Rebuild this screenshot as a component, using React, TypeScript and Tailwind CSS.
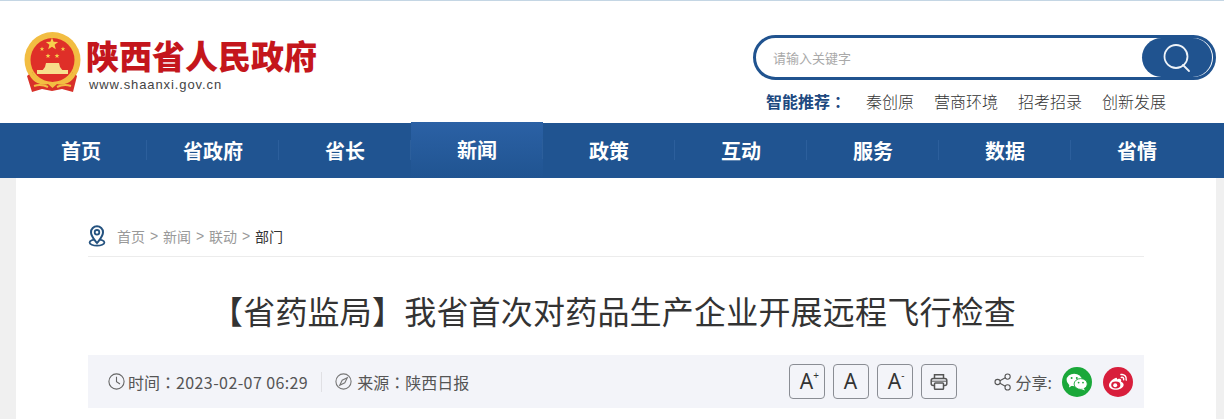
const CJK = `"Noto Sans CJK SC", "Liberation Sans", sans-serif`;
const TC = `"Noto Sans CJK TC", sans-serif`;

function Star({ x, y, r }: { x: number; y: number; r: number }) {
  const pts = Array.from({ length: 10 }, (_, i) => {
    const rr = i % 2 === 0 ? r : r * 0.42;
    const a = (Math.PI / 5) * i - Math.PI / 2;
    return `${x + rr * Math.cos(a)},${y + rr * Math.sin(a)}`;
  }).join(" ");
  return <polygon points={pts} fill="#f6d04d" />;
}

function Emblem() {
  return (
    <svg width="57" height="60" viewBox="0 0 57 60" className="shrink-0">
      <circle cx="28.5" cy="28" r="28" fill="#f2bd42" />
      <circle cx="28.5" cy="28" r="22" fill="#df2f28" />
      <Star x={28} y={12} r={6.5} />
      <Star x={18} y={17} r={2.4} />
      <Star x={39} y={17} r={2.4} />
      <Star x={24} y={24} r={2.6} />
      <Star x={33} y={24} r={2.6} />
      <path d="M18 39 L39 39 L36 35 L35 31 L22 31 L21 35 Z" fill="#f7dc8a" />
      <rect x="13" y="38" width="31" height="4" fill="#f8e08e" />
      <path d="M8 40 L3 44 L8 60 L18 57 L28 59 L38 57 L49 60 L53 44 L49 40 C44 50 36 52 28.5 52 C21 52 13 50 8 40 Z" fill="#d83029" />
      <path d="M7 38 C11 47 19 50 28.5 50 C38 50 46 47 50 38 L53 40 C49 51 39 54 33 52 L28.5 56 L24 52 C18 54 8 51 4 40 Z" fill="#f2bd42" />
      <path d="M10 54 C16 52 20 53 24 55 M33 55 C37 53 41 52 47 54" fill="none" stroke="#f2bd42" strokeWidth="2" />
    </svg>
  );
}

function SearchIcon() {
  return (
    <svg width="30" height="30" viewBox="0 0 30 30" fill="none" stroke="#eef3f8" strokeWidth="1.8">
      <circle cx="14" cy="13.5" r="11.5" />
      <path d="M21 22 L27 28" strokeLinecap="round" />
    </svg>
  );
}

function PinIcon() {
  return (
    <svg width="18" height="22" viewBox="0 0 18 22" fill="none" className="shrink-0">
      <ellipse cx="9" cy="17.5" rx="7.4" ry="3.2" stroke="#24527f" strokeWidth="1.8" />
      <path d="M9 18 C6 14 3 11.5 3 7.3 A6 6 0 0 1 15 7.3 C15 11.5 12 14 9 18 Z" fill="#fff" stroke="#24527f" strokeWidth="2" />
      <circle cx="9" cy="7.3" r="2.3" stroke="#24527f" strokeWidth="1.8" />
    </svg>
  );
}

function ClockIcon() {
  return (
    <svg width="17" height="17" viewBox="0 0 17 17" fill="none" stroke="#666" strokeWidth="1.1" className="shrink-0">
      <circle cx="8.5" cy="8.5" r="7.6" />
      <path d="M8.5 3.8 V8.7 L12 11" />
    </svg>
  );
}

function CompassIcon() {
  return (
    <svg width="17" height="17" viewBox="0 0 17 17" fill="none" stroke="#777" strokeWidth="1.1" className="shrink-0">
      <circle cx="8.5" cy="8.5" r="7.6" />
      <path d="M12.3 4.7 L9.8 9.8 L4.7 12.3 L7.2 7.2 Z" />
    </svg>
  );
}

function PrintIcon() {
  return (
    <svg width="18" height="18" viewBox="0 0 18 18" fill="none" stroke="#555" strokeWidth="1.5">
      <path d="M4.5 5.5 V1.8 H13.5 V5.5" />
      <rect x="1.2" y="5.5" width="15.6" height="7" rx="2" />
      <rect x="4.5" y="10" width="9" height="6.2" rx="0.8" fill="#f3f4f9" />
      <path d="M1.5 8.2 H16.5" strokeWidth="1" />
    </svg>
  );
}

function ShareIcon() {
  return (
    <svg width="18" height="18" viewBox="0 0 18 18" fill="none" stroke="#555" strokeWidth="1.1" className="shrink-0">
      <circle cx="3.6" cy="9" r="2.6" />
      <circle cx="13.6" cy="3.6" r="2.6" />
      <circle cx="13.6" cy="14.4" r="2.6" />
      <path d="M5.9 7.8 L11.3 4.8 M5.9 10.2 L11.3 13.2" />
    </svg>
  );
}

function WeChatIcon() {
  return (
    <svg width="22" height="18" viewBox="0 0 22 18">
      <ellipse cx="8.2" cy="7" rx="7.6" ry="6.2" fill="#fff" />
      <path d="M3.5 10.5 L3 14.5 L7 12 Z" fill="#fff" />
      <circle cx="5.6" cy="5" r="1" fill="#1aa83a" />
      <circle cx="10.8" cy="5" r="1" fill="#1aa83a" />
      <ellipse cx="14.7" cy="11" rx="6.6" ry="5.4" fill="#fff" stroke="#1aa83a" strokeWidth="0.9" />
      <path d="M17.5 15 L19 17.5 L15 16 Z" fill="#fff" />
      <circle cx="12.6" cy="9.6" r="0.9" fill="#1aa83a" />
      <circle cx="17" cy="9.6" r="0.9" fill="#1aa83a" />
    </svg>
  );
}

function WeiboIcon() {
  return (
    <svg width="20" height="18" viewBox="0 0 20 18">
      <path d="M8 4.8 C3.8 6.4 0.6 10 1 12.8 C1.5 16 5.5 17.2 9 16.8 C13 16.4 16 14 15.6 11.3 C15.3 9.6 13.6 9.2 13 8.8 C13.6 7.3 13.2 5.9 11.6 5.8 C10.6 5.7 9.5 6.3 9 6.6 C9.3 5.4 9 4.5 8 4.8 Z" fill="#fff" />
      <ellipse cx="7.8" cy="12" rx="4.6" ry="3.4" fill="#d81e3c" />
      <circle cx="7.2" cy="12.2" r="2" fill="#fff" />
      <path d="M13 1.6 C16.2 0.9 18.9 3.6 18.2 7 M13.3 4.4 C15 4 16 5.2 15.6 6.8" fill="none" stroke="#fff" strokeWidth="1.5" strokeLinecap="round" />
    </svg>
  );
}

function FontBtn({ label, sup }: { label: string; sup?: string }) {
  return (
    <div className="w-[36px] h-[35px] border border-[#8a8d94] rounded-[4px] flex items-center justify-center text-[#333] text-[21px] leading-none" style={{ fontFamily: `"Noto Sans", "Liberation Sans", sans-serif` }}>
      <span className="relative">
        {label}
        {sup && <span className="absolute left-full top-[-1px] text-[10px] leading-none">{sup}</span>}
      </span>
    </div>
  );
}

function Sep() {
  return <span className="w-[18px] text-center" style={{ fontFamily: `"Liberation Sans", sans-serif` }}>&gt;</span>;
}

function Colon() {
  return <span style={{ fontFamily: TC }}>：</span>;
}

const NAV = ["首页", "省政府", "省长", "新闻", "政策", "互动", "服务", "数据", "省情"];
const REC = ["秦创原", "营商环境", "招考招录", "创新发展"];

export default function App() {
  return (
    <div className="w-[1224px] h-[419px] overflow-hidden bg-[#f0f0f0]" style={{ fontFamily: CJK }}>
      <header className="h-[123px] bg-white border-t border-[#c4d6e4] flex justify-between">
        <div className="pl-[24px] pt-[31px] flex items-start gap-[6px]">
          <Emblem />
          <div className="pt-[3px]">
            <div className="-ml-[1px] text-[#c4161c] text-[33px] leading-[40px] font-black whitespace-nowrap">陕西省人民政府</div>
            <div className="mt-[2px] ml-[2px] text-[#444] text-[13px] leading-[16px] tracking-[0.9px]" style={{ fontFamily: `"Liberation Sans", sans-serif` }}>www.shaanxi.gov.cn</div>
          </div>
        </div>
        <div className="pr-[8px] pt-[34px] flex flex-col items-end">
          <div className="w-[463px] h-[45px] rounded-full border-[3px] border-[#20538f] flex items-center justify-between pl-[17px] pr-[1px]">
            <span className="text-[#a9a9a9] text-[13px]">请输入关键字</span>
            <div className="w-[70px] h-[39px] rounded-full bg-[#20538f] flex items-center justify-center">
              <SearchIcon />
            </div>
          </div>
          <div className="mt-[10px] pr-[50px] h-[22px] flex items-center text-[#333] whitespace-nowrap">
            <span className="text-[#20497f] text-[16px] font-bold w-[100px]">智能推荐<Colon /></span>
            <div className="flex gap-[20px]">
              {REC.map((r) => (
                <span key={r} className="text-[16px] font-light">{r}</span>
              ))}
            </div>
          </div>
        </div>
      </header>

      <nav className="h-[55px] bg-[#205491] pl-[15px] flex">
        {NAV.map((n, i) => (
          <div key={n} className={`relative w-[132px] flex items-center justify-center ${i === 3 ? "h-[56px] -mt-[1px] bg-gradient-to-b from-[#2b61a5] to-[#205491]" : "h-[55px]"}`}>
            <span className="text-white text-[20px] font-bold leading-none">{n}</span>
            {i < 8 && <span className="absolute right-0 top-[17px] h-[20px] w-px bg-[#2c5f9c]" />}
          </div>
        ))}
      </nav>

      <main className="ml-[16px] w-[1200px] h-[241px] bg-white px-[72px]">
        <div className="h-[79px] pt-[47px] border-b border-[#ececec] flex items-start gap-[11px]">
          <PinIcon />
          <div className="flex text-[14px] leading-[24px] text-[#999] whitespace-nowrap -mt-px">
            <span>首页</span><Sep /><span>新闻</span><Sep /><span>联动</span><Sep /><span className="text-[#333]">部门</span>
          </div>
        </div>
        <h1 className="mt-[31px] pr-[5px] h-[44px] text-center text-[32px] leading-[44px] font-normal tracking-[0.2px] text-[#333] whitespace-nowrap">【省药监局】我省首次对药品生产企业开展远程飞行检查</h1>
        <div className="mt-[23px] h-[53px] bg-[#f3f4f9] flex items-center justify-between pl-[20px] pr-[11px] text-[#555] text-[16px]">
          <div className="flex items-center whitespace-nowrap">
            <ClockIcon />
            <span className="ml-[3px]">时间<Colon /><span className="tracking-[0.4px]">2023-02-07 06:29</span></span>
            <span className="mx-[13px] h-[20px] w-px bg-[#e0e0e4]" />
            <CompassIcon />
            <span className="ml-[5px]">来源<Colon />陕西日报</span>
          </div>
          <div className="flex items-center whitespace-nowrap">
            <div className="flex gap-[8px]">
              <FontBtn label="A" sup="+" />
              <FontBtn label="A" />
              <FontBtn label="A" sup="-" />
              <div className="w-[36px] h-[35px] border border-[#8a8d94] rounded-[4px] flex items-center justify-center"><PrintIcon /></div>
            </div>
            <div className="ml-[37px] flex items-center gap-[4px]">
              <ShareIcon />
              <span className="text-[16px]">分享:</span>
            </div>
            <div className="ml-[10px] w-[30px] h-[30px] rounded-full bg-[#1aa83a] flex items-center justify-center"><WeChatIcon /></div>
            <div className="ml-[11px] w-[30px] h-[30px] rounded-full bg-[#d81e3c] flex items-center justify-center"><WeiboIcon /></div>
          </div>
        </div>
      </main>
    </div>
  );
}
